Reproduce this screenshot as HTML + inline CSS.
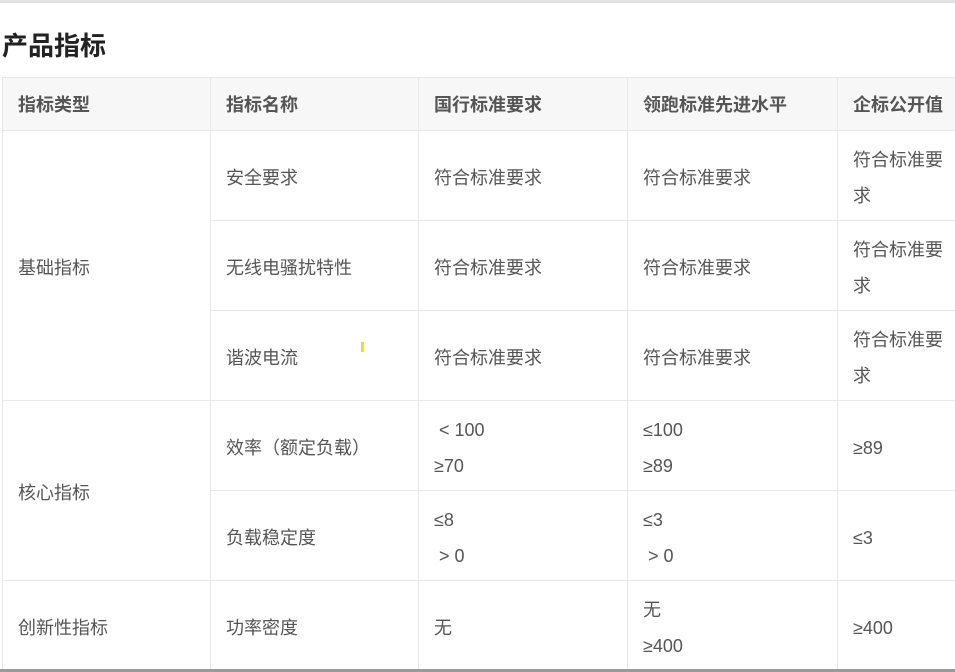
<!DOCTYPE html>
<html><head><meta charset="utf-8"><style>
*{margin:0;padding:0;box-sizing:border-box}
body{width:955px;height:672px;overflow:hidden;background:#fff;position:relative;font-family:"Liberation Sans","Noto Sans CJK SC",sans-serif;color:#555;font-size:18px}
.top{position:absolute;left:0;top:0;width:955px;height:3px;background:#e2e2e2}
h1{position:absolute;left:2px;top:28px;font-size:26px;line-height:36px;font-weight:bold;color:#222}
.c{position:absolute;border-left:1px solid #e8e8e8;border-top:1px solid #e8e8e8;display:flex;flex-direction:column;justify-content:center;padding-left:15px;padding-top:4px;line-height:36px}
.h{background:#f7f7f7;font-weight:bold;border-bottom:1px solid #e8e8e8;padding-top:2px}
.bot{position:absolute;left:0;top:669px;width:955px;height:3px;background:#9a9a9a}
</style></head><body>
<div class="top"></div>
<h1>产品指标</h1>

<div class="c h" style="left:2px;top:77px;width:208px;height:54px">指标类型</div>
<div class="c h" style="left:210px;top:77px;width:208px;height:54px">指标名称</div>
<div class="c h" style="left:418px;top:77px;width:209px;height:54px">国行标准要求</div>
<div class="c h" style="left:627px;top:77px;width:210px;height:54px">领跑标准先进水平</div>
<div class="c h" style="left:837px;top:77px;width:200px;height:54px">企标公开值</div>

<div class="c" style="left:2px;top:130px;width:208px;height:270px">基础指标</div>
<div class="c" style="left:210px;top:130px;width:208px;height:90px">安全要求</div>
<div class="c" style="left:418px;top:130px;width:209px;height:90px">符合标准要求</div>
<div class="c" style="left:627px;top:130px;width:210px;height:90px">符合标准要求</div>
<div class="c" style="left:837px;top:130px;width:200px;height:90px">符合标准要<br>求</div>

<div class="c" style="left:210px;top:220px;width:208px;height:90px">无线电骚扰特性</div>
<div class="c" style="left:418px;top:220px;width:209px;height:90px">符合标准要求</div>
<div class="c" style="left:627px;top:220px;width:210px;height:90px">符合标准要求</div>
<div class="c" style="left:837px;top:220px;width:200px;height:90px">符合标准要<br>求</div>

<div class="c" style="left:210px;top:310px;width:208px;height:90px">谐波电流</div>
<div class="c" style="left:418px;top:310px;width:209px;height:90px">符合标准要求</div>
<div class="c" style="left:627px;top:310px;width:210px;height:90px">符合标准要求</div>
<div class="c" style="left:837px;top:310px;width:200px;height:90px">符合标准要<br>求</div>
<div style="position:absolute;left:361px;top:342px;width:3px;height:10px;background:#f5e000"></div>

<div class="c" style="left:2px;top:400px;width:208px;height:180px">核心指标</div>
<div class="c" style="left:210px;top:400px;width:208px;height:90px">效率（额定负载）</div>
<div class="c" style="left:418px;top:400px;width:209px;height:90px"><span>&nbsp;&lt; 100</span><span>≥70</span></div>
<div class="c" style="left:627px;top:400px;width:210px;height:90px">≤100<br>≥89</div>
<div class="c" style="left:837px;top:400px;width:200px;height:90px">≥89</div>

<div class="c" style="left:210px;top:490px;width:208px;height:90px">负载稳定度</div>
<div class="c" style="left:418px;top:490px;width:209px;height:90px"><span>≤8</span><span>&nbsp;&gt; 0</span></div>
<div class="c" style="left:627px;top:490px;width:210px;height:90px"><span>≤3</span><span>&nbsp;&gt; 0</span></div>
<div class="c" style="left:837px;top:490px;width:200px;height:90px">≤3</div>

<div class="c" style="left:2px;top:580px;width:208px;height:90px">创新性指标</div>
<div class="c" style="left:210px;top:580px;width:208px;height:90px">功率密度</div>
<div class="c" style="left:418px;top:580px;width:209px;height:90px">无</div>
<div class="c" style="left:627px;top:580px;width:210px;height:90px">无<br>≥400</div>
<div class="c" style="left:837px;top:580px;width:200px;height:90px">≥400</div>

<div class="bot"></div>
</body></html>
